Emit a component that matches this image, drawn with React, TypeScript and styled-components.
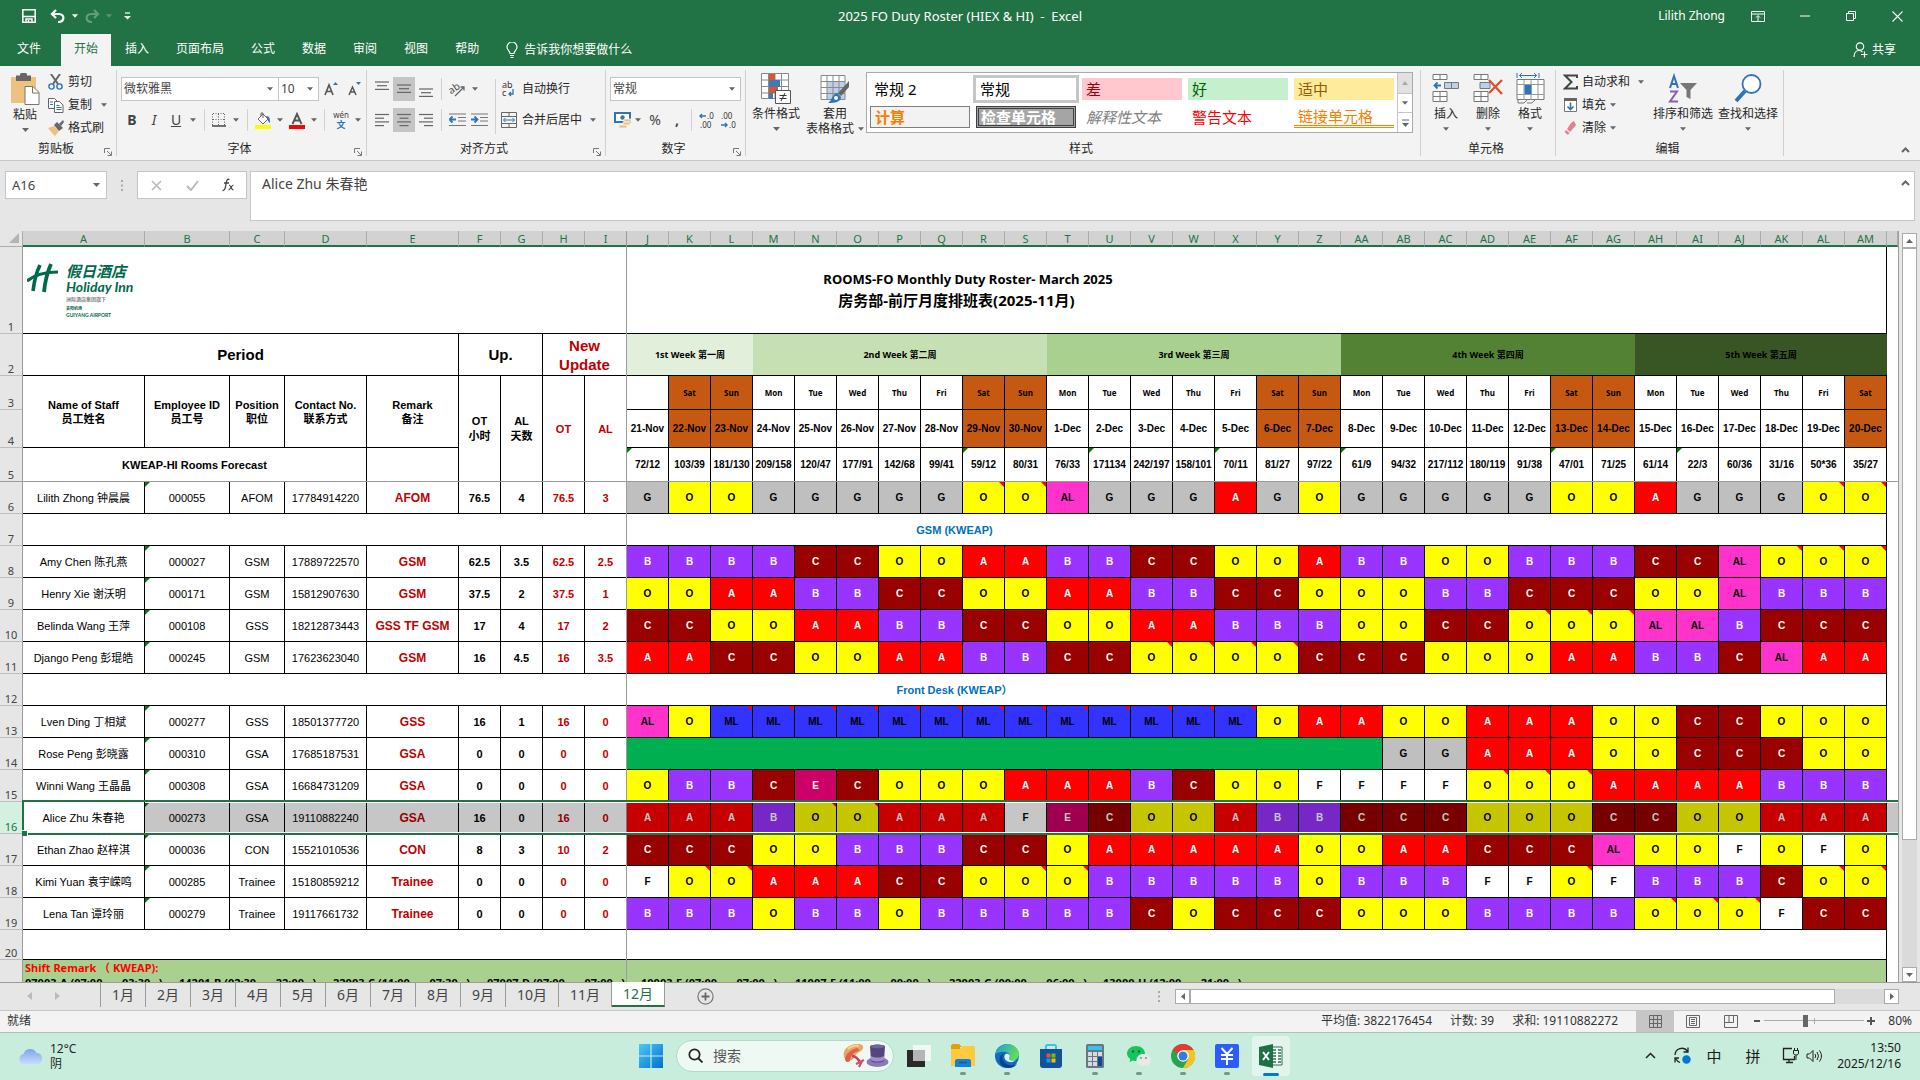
import React from "react";
import styled, { createGlobalStyle, css } from "styled-components";

const UI_FONT = `"Noto Sans", "Noto Sans CJK SC", sans-serif`;
const CELL_FONT = `"Liberation Sans", "Noto Sans CJK SC", sans-serif`;
const GREEN = "#217346";
const LINE = "#000";

const Global = createGlobalStyle`
  *, *::before, *::after { box-sizing: border-box; }
  html, body { margin: 0; padding: 0; }
  body { background: #e6e6e6; font: 12px/16px ${UI_FONT}; color: #262626; }
  button, input, select, textarea { font: inherit; color: inherit; margin: 0; }
`;

/* ---------- frame ---------- */

const Window = styled.div`
  display: flex;
  flex-direction: column;
  height: 100vh;
  min-height: 480px;
  overflow: hidden;
`;

const bareButton = css`
  border: 0;
  padding: 0;
  background: none;
  display: flex;
  align-items: center;
  justify-content: center;
`;

/* ---------- title bar and tabs ---------- */

const TitleBar = styled.header`
  flex: none;
  display: grid;
  grid-template-columns: 1fr auto 1fr;
  align-items: center;
  height: 32px;
  background: ${GREEN};
  color: #fff;
`;
const TitleText = styled.div`
  font-size: 13px;
  white-space: pre;
`;
const UserName = styled.span`
  margin-right: 9px;
`;
const QuickAccess = styled.div`
  display: flex;
  align-items: center;
  padding-left: 16px;
`;
const WindowTools = styled.div`
  display: flex;
  align-items: center;
  justify-content: flex-end;
`;
const QuickButton = styled.button<{ $w: number; $dim?: boolean }>`
  ${bareButton}
  width: ${(p) => p.$w}px;
  height: 30px;
  opacity: ${(p) => (p.$dim ? 0.3 : 1)};
`;
const TabBar = styled.nav`
  flex: none;
  display: flex;
  gap: 1px;
  height: 34px;
  padding-top: 2px;
  padding-left: 4px;
  background: ${GREEN};
  color: #fff;
`;
const Tab = styled.button<{ $active?: boolean; $file?: boolean }>`
  ${bareButton}
  padding: 0 ${(p) => (p.$file ? 19 : 13)}px 2px 13px;
  background: ${(p) => (p.$active ? "#f3f3f3" : "none")};
  color: ${(p) => (p.$active ? GREEN : "#fff")};
`;
const TellMe = styled.button`
  ${bareButton}
  gap: 6px;
  margin-left: 13px;
`;
const Share = styled.button`
  ${bareButton}
  gap: 4px;
  margin-left: auto;
  margin-right: 24px;
`;

/* ---------- ribbon ---------- */

const Ribbon = styled.div`
  flex: none;
  display: flex;
  height: 95px;
  padding: 4px 0;
  background: #f3f3f3;
  border-bottom: 1px solid #c6c6c6;
`;
const Group = styled.section<{ $w: number }>`
  display: flex;
  flex-direction: column;
  flex: none;
  width: ${(p) => p.$w}px;
  border-right: 1px solid #d2d0ce;
`;
const GroupBody = styled.div<{ $pad?: number }>`
  display: flex;
  align-items: flex-start;
  flex: 1;
  padding-left: ${(p) => p.$pad ?? 0}px;
`;
const GroupFoot = styled.div`
  display: grid;
  grid-template-columns: 1fr auto 1fr;
  align-items: end;
  height: 14px;
  padding-right: 4px;
`;
const FootLabel = styled.span`
  line-height: 14px;
`;
const Launcher = styled.button`
  ${bareButton}
  justify-self: end;
`;
const Collapse = styled.button`
  ${bareButton}
  align-self: flex-end;
  margin-left: auto;
  width: 30px;
  height: 12px;
`;
const BigButton = styled.button<{ $w: number }>`
  ${bareButton}
  flex-direction: column;
  justify-content: flex-start;
  width: ${(p) => p.$w}px;
  padding-top: 3px;
  white-space: nowrap;
  & > svg:first-child { margin-bottom: 2px; }
`;
const SmallCaretRow = styled.span`
  display: flex;
  align-items: center;
  gap: 4px;
  min-height: 14px;
  line-height: 14px;
`;
const Stack = styled.div`
  display: flex;
  flex-direction: column;
`;
const StackButton = styled.button`
  ${bareButton}
  justify-content: flex-start;
  gap: 4px;
  height: 23px;
  white-space: nowrap;
`;
const TwoRows = styled.div`
  display: flex;
  flex-direction: column;
  gap: 7px;
  padding-top: 7px;
`;
const ToolRow = styled.div`
  display: flex;
  align-items: center;
  height: 24px;
`;
const Tool = styled.button<{ $w: number; $on?: boolean }>`
  ${bareButton}
  width: ${(p) => p.$w}px;
  height: 24px;
  color: #444;
  font-size: 14px;
  background: ${(p) => (p.$on ? "#c5c5c5" : "none")};
`;
const TextTool = styled.button`
  ${bareButton}
  gap: 5px;
  height: 24px;
  white-space: nowrap;
`;
const Rule = styled.span<{ $w: number; $h?: number }>`
  flex: none;
  display: flex;
  justify-content: center;
  align-self: center;
  width: ${(p) => p.$w}px;
  height: ${(p) => p.$h ?? 22}px;
  &::before { content: ""; width: 1px; background: #d0d0d0; }
`;
const Combo = styled.label<{ $w: number }>`
  display: flex;
  align-items: center;
  width: ${(p) => p.$w}px;
  height: 24px;
  padding-right: 5px;
  background: #fff;
  border: 1px solid #c6c6c6;
  & + & { margin-left: -1px; }
  select {
    appearance: none;
    flex: 1;
    min-width: 0;
    border: 0;
    padding: 0 2px;
    background: none;
    outline: 0;
    color: #444;
  }
`;

const Gallery = styled.div`
  display: flex;
  height: 61px;
  margin: 2px 0 0 2px;
  border: 1px solid #ababab;
  background: #fff;
`;
const GalleryGrid = styled.div`
  display: grid;
  grid-template-columns: repeat(5, 100px);
  grid-auto-rows: 22px;
  gap: 6px;
  padding: 5px 3px;
`;
const Swatch = styled.button<{ $bg?: string; $fg?: string; $kind?: string }>`
  ${bareButton}
  justify-content: flex-start;
  padding-left: 4px;
  font-size: 15px;
  line-height: 20px;
  white-space: pre;
  background: ${(p) => p.$bg ?? "#fff"};
  color: ${(p) => p.$fg ?? "#000"};
  ${(p) => p.$kind === "current" && css`outline: 3px solid #c6c6c6;`}
  ${(p) => p.$kind === "calc" && css`border: 1px solid #7f7f7f; font-weight: 700;`}
  ${(p) => p.$kind === "check" && css`border: 3px double #3f3f3f; font-weight: 700; padding-left: 2px;`}
  ${(p) => p.$kind === "note" && css`font-style: italic;`}
  ${(p) => p.$kind === "link" && css`border-bottom: 3px double #ff8001;`}
`;
const GallerySide = styled.div`
  display: grid;
  grid-template-rows: repeat(3, 1fr);
  width: 15px;
  border-left: 1px solid #c6c6c6;
`;
const GalleryStep = styled.button<{ $off?: boolean }>`
  ${bareButton}
  background: ${(p) => (p.$off ? "#e1e1e1" : "#fff")};
  & + & { border-top: 1px solid #c6c6c6; }
`;

/* ---------- formula bar ---------- */

const FormulaBar = styled.div`
  flex: none;
  display: flex;
  align-items: flex-start;
  padding: 10px 5px;
  height: 70px;
  background: #e6e6e6;
`;
const NameBox = styled.label`
  display: flex;
  align-items: center;
  width: 102px;
  height: 28px;
  padding: 0 6px;
  background: #fff;
  border: 1px solid #c6c6c6;
  input {
    flex: 1;
    min-width: 0;
    border: 0;
    padding: 0;
    outline: 0;
    background: none;
    font-size: 13px;
    color: #444;
  }
`;
const Grip = styled.span`
  display: flex;
  justify-content: center;
  align-items: center;
  width: 30px;
  height: 28px;
`;
const FormulaTools = styled.div`
  display: flex;
  width: 110px;
  height: 28px;
  background: #fff;
  border: 1px solid #c6c6c6;
  margin-right: 3px;
`;
const FormulaTool = styled.button`
  ${bareButton}
  flex: 1;
`;
const FormulaBox = styled.label`
  display: flex;
  flex: 1;
  align-items: flex-start;
  height: 50px;
  padding: 2px 4px 0 11px;
  background: #fff;
  border: 1px solid #c6c6c6;
  textarea {
    flex: 1;
    height: 40px;
    border: 0;
    padding: 0;
    outline: 0;
    resize: none;
    background: none;
    font-size: 14px;
    line-height: 20px;
    color: #444;
  }
  svg { margin-top: 6px; }
`;

/* ---------- sheet ---------- */

const SheetArea = styled.main`
  flex: 1;
  min-height: 0;
  display: flex;
`;
const Viewport = styled.div`
  position: relative;
  flex: 1;
  min-width: 0;
  overflow: hidden;
  background: #fff;
  border-right: 1px solid #9b9b9b;
`;
const Grid = styled.table`
  table-layout: fixed;
  width: 100%;
  border-collapse: separate;
  border-spacing: 0;
  font-family: ${CELL_FONT};
  font-size: 11px;
  line-height: 14px;
  color: #000;
`;
const ColHead = styled.th`
  height: 16px;
  padding: 1px 0 0;
  background: #d2d2d2;
  border-right: 1px solid #ababab;
  border-bottom: 2px solid ${GREEN};
  font: 11px/13px ${UI_FONT};
  color: ${GREEN};
`;
const Corner = styled.td`
  padding: 0;
  background: #e6e6e6;
  border-right: 1px solid #ababab;
  border-bottom: 1px solid #ababab;
  svg { display: block; margin: 0 3px 2px auto; }
`;
const RowHead = styled.th<{ $on?: boolean }>`
  padding: 0;
  vertical-align: bottom;
  text-align: center;
  background: ${(p) => (p.$on ? "#d3f0e0" : "#e6e6e6")};
  color: ${(p) => (p.$on ? GREEN : "#444")};
  border-right: 1px solid #9b9b9b;
  border-bottom: 1px solid #bdbdbd;
  font: 11px/12px ${UI_FONT};
`;
const Row = styled.tr<{ $h: number }>`
  height: ${(p) => p.$h}px;
`;
type CellProps = {
  $bg?: string;
  $fg?: string;
  $bold?: boolean;
  $size?: number;
  $lh?: number;
  $flag?: "green" | "red";
  $open?: boolean;
  $ui?: boolean;
};
const Cell = styled.td<CellProps>`
  position: relative;
  padding: 0;
  text-align: center;
  vertical-align: middle;
  white-space: pre;
  background: ${(p) => p.$bg ?? "#fff"};
  color: ${(p) => p.$fg ?? "#000"};
  font-weight: ${(p) => (p.$bold ? 700 : 400)};
  font-size: ${(p) => p.$size ?? 11}px;
  line-height: ${(p) => p.$lh ?? 14}px;
  ${(p) => p.$ui && css`font-family: ${UI_FONT};`}
  border-right: ${(p) => (p.$open ? 0 : 1)}px solid ${LINE};
  border-bottom: 1px solid ${LINE};
  ${(p) =>
    p.$flag &&
    css`
      &::after {
        content: "";
        position: absolute;
        top: 0;
        ${p.$flag === "green" ? "left: 0;" : "right: 0;"}
        border-top: 5px solid ${p.$flag === "green" ? "#007a00" : "#f00"};
        ${p.$flag === "green" ? "border-right" : "border-left"}: 5px solid transparent;
      }
    `}
`;
const Spare = styled.td`
  padding: 0;
  background: #fff;
`;
const TitleLine = styled.div<{ $size: number }>`
  font: 700 ${(p) => p.$size}px/21px ${UI_FONT};
`;
const Logo = styled.div`
  position: absolute;
  top: 16px;
  left: 4px;
  display: flex;
  gap: 8px;
  text-align: left;
  font-weight: 700;
  color: #00694b;
`;
const LogoText = styled.div<{ $size: number; $lh: number; $grey?: boolean; $slant?: boolean }>`
  font-family: Lato, "Noto Sans CJK SC", sans-serif;
  font-size: ${(p) => p.$size}px;
  line-height: ${(p) => p.$lh}px;
  color: ${(p) => (p.$grey ? "#888" : "inherit")};
  font-style: ${(p) => (p.$slant ? "italic" : "normal")};
`;
const FreezeV = styled.div`
  position: absolute;
  top: 0;
  bottom: 0;
  left: 626px;
  width: 1px;
  background: #9b9b9b;
`;
const FreezeH = styled.div<{ $top: number }>`
  position: absolute;
  top: ${(p) => p.$top}px;
  left: 0;
  right: 0;
  height: 1px;
  background: #9b9b9b;
`;
const Selection = styled.div<{ $top: number; $h: number }>`
  position: absolute;
  top: ${(p) => p.$top - 2}px;
  left: 22px;
  right: 0;
  height: ${(p) => p.$h + 3}px;
  border: 2px solid ${GREEN};
  border-right: 0;
  &::before {
    content: "";
    position: absolute;
    inset: 0 0 0 121px;
    border-top: 1px solid #fff;
    border-bottom: 1px solid #fff;
    background: rgba(0, 0, 0, 0.225);
    background-clip: padding-box;
  }
  &::after {
    content: "";
    position: absolute;
    left: -2px;
    bottom: -3px;
    width: 6px;
    height: 6px;
    background: ${GREEN};
    border-top: 1px solid #fff;
    border-right: 1px solid #fff;
  }
`;
const ShiftBlock = styled.div`
  height: 59px;
  padding: 0 2px;
  text-align: left;
  font-family: ${UI_FONT};
`;
const ShiftTitle = styled.div`
  line-height: 16px;
  color: #f00;
`;
const ShiftList = styled.div`
  display: flex;
  line-height: 14px;
`;
const ShiftItem = styled.span`
  width: 154px;
`;

const ScrollV = styled.div`
  flex: none;
  display: flex;
  flex-direction: column;
  width: 21px;
  padding: 2px 3px 0;
`;
const ScrollStep = styled.button`
  ${bareButton}
  flex: none;
  width: 15px;
  height: 15px;
  background: #fff;
  border: 1px solid #ababab;
`;
const Track = styled.div<{ $row?: boolean }>`
  flex: 1;
  display: flex;
  flex-direction: ${(p) => (p.$row ? "row" : "column")};
  background: #dadada;
`;
const Thumb = styled.div<{ $share: string }>`
  flex: 0 0 ${(p) => p.$share};
  background: #fff;
  border: 1px solid #ababab;
`;

/* ---------- sheet tabs, status bar ---------- */

const SheetTabs = styled.div`
  flex: none;
  display: flex;
  height: 28px;
  padding-left: 15px;
  border-top: 1px solid #9b9b9b;
  background: #e6e6e6;
  color: #444;
`;
const TabNav = styled.button`
  ${bareButton}
  width: 28px;
  height: 26px;
`;
const SheetTab = styled.button<{ $w: number; $on?: boolean }>`
  ${bareButton}
  width: ${(p) => p.$w}px;
  font-size: 14px;
  height: 24px;
  border-right: 1px solid #9b9b9b;
  ${(p) =>
    p.$on &&
    css`
      margin-top: -1px;
      height: 25px;
      background: #fff;
      color: ${GREEN};
      border-bottom: 2px solid ${GREEN};
    `}
`;
const SheetTabList = styled.div`
  display: flex;
  margin-left: 29px;
  border-left: 1px solid #9b9b9b;
  height: 24px;
`;
const AddSheet = styled.button`
  ${bareButton}
  width: 80px;
`;
const ScrollH = styled.div`
  display: flex;
  width: 38%;
  height: 15px;
  margin: 6px 21px 0 0;
`;
const TabGrip = styled.span`
  margin-left: auto;
  display: flex;
  align-items: center;
  padding-right: 15px;
`;
const StatusBar = styled.footer`
  flex: none;
  display: flex;
  align-items: center;
  height: 22px;
  padding: 0 8px 1px 7px;
  background: #f3f3f3;
  border-top: 1px solid #c6c6c6;
  color: #333;
`;
const Stats = styled.div`
  display: flex;
  gap: 18px;
  margin-left: auto;
  margin-right: 18px;
`;
const ViewButton = styled.button<{ $on?: boolean }>`
  ${bareButton}
  width: 38px;
  height: 21px;
  background: ${(p) => (p.$on ? "#c6c6c6" : "none")};
`;
const ZoomStep = styled.button`
  ${bareButton}
  width: 14px;
  height: 20px;
`;
const ZoomRange = styled.input`
  appearance: none;
  width: 100px;
  height: 14px;
  background: linear-gradient(#ababab, #ababab) 0 6px / 100% 1px no-repeat,
    linear-gradient(#ababab, #ababab) 50% 50% / 1px 6px no-repeat;
  &::-webkit-slider-thumb {
    appearance: none;
    width: 5px;
    height: 12px;
    background: #666;
  }
`;
const ZoomValue = styled.span`
  width: 34px;
  text-align: right;
`;

/* ---------- taskbar ---------- */

const Taskbar = styled.div`
  flex: none;
  display: grid;
  grid-template-columns: 1fr auto 1fr;
  align-items: center;
  height: 48px;
  padding-bottom: 1px;
  background: #c8eddd;
  box-shadow: inset 0 1px #a9c5b9;
`;
const Weather = styled.button`
  ${bareButton}
  justify-self: start;
  gap: 6px;
  padding-left: 18px;
  text-align: left;
  line-height: 15px;
`;
const Apps = styled.div`
  display: flex;
  align-items: center;
  padding-left: 2px;
`;
const AppButton = styled.button<{ $dot?: boolean; $on?: boolean }>`
  ${bareButton}
  position: relative;
  width: 44px;
  height: 40px;
  ${(p) =>
    p.$on &&
    css`
      width: 38px;
      margin: 0 3px;
      border-radius: 4px;
      background: #e2f5ed;
    `}
  ${(p) =>
    (p.$dot || p.$on) &&
    css`
      &::after {
        content: "";
        position: absolute;
        bottom: ${p.$on ? 0 : 1}px;
        width: ${p.$on ? 16 : 6}px;
        height: 3px;
        border-radius: 2px;
        background: ${p.$on ? "#0078d4" : "#7c938a"};
      }
    `}
`;
const Search = styled.label`
  display: flex;
  align-items: center;
  gap: 10px;
  width: 218px;
  height: 32px;
  margin: 0 3px;
  padding: 0 4px 0 11px;
  border-radius: 16px;
  background: #eef9f4;
  border: 1px solid #b5d8c9;
  input {
    flex: 1;
    min-width: 0;
    padding: 0;
    border: 0;
    outline: 0;
    background: none;
    font-size: 14px;
  }
  input::placeholder { color: #555; opacity: 1; }
`;
const Tray = styled.div`
  display: flex;
  justify-content: flex-end;
  align-items: center;
  padding-right: 19px;
  color: #1a1a1a;
`;
const TrayButton = styled.button<{ $w: number }>`
  ${bareButton}
  width: ${(p) => p.$w}px;
  height: 40px;
  font-size: 15px;
`;
const Clock = styled.time`
  width: 78px;
  text-align: right;
  line-height: 16px;
`;

/* ---------- drawings ---------- */

const Drawing = styled.svg`
  flex: none;
`;
const Svg = ({ w, h = w, children, vb }: { w: number; h?: number; vb?: string; children: React.ReactNode }) => (
  <Drawing width={w} height={h} viewBox={vb ?? `0 0 ${w} ${h}`} fill="none" aria-hidden="true">
    {children}
  </Drawing>
);
const Caret = ({ c = "#666", w = 7 }: { c?: string; w?: number }) => (
  <Svg w={w} h={4} vb="0 0 7 4"><path d="M0 0h7L3.5 4z" fill={c} /></Svg>
);
const LaunchIcon = () => (
  <Svg w={8}><path d="M.5 5V.5H6M7.5 3.5v4h-4M3 3l4 4" stroke="#777" /></Svg>
);
const UpChevron = () => (
  <Svg w={9} h={6}><path d="M1 5l3.5-3.5L8 5" stroke="#666" strokeWidth="2" /></Svg>
);
const Lines = ({ rows, top }: { rows: [number, number][]; top: number }) => (
  <Svg w={14} h={18}>
    {rows.map(([x, len], i) => (
      <path key={i} d={`M${x} ${top + i * 3.7}h${len}`} stroke="#666" strokeWidth="1.2" />
    ))}
  </Svg>
);
const Indent = ({ right }: { right?: boolean }) => (
  <Svg w={17} h={14}>
    <path d="M0 1h17M9 4.5h8M9 8h8M0 12.5h17" stroke="#777" />
    <path d={right ? "M0 6.5h6M3.5 3.5l3 3-3 3" : "M7 6.5H1M3.5 3.5l-3 3 3 3"} stroke="#2f75b5" strokeWidth="1.8" />
  </Svg>
);

/* ---------- roster data ---------- */

const SHIFT: Record<string, [string, string]> = {
  G: ["#bfbfbf", "#000"],
  O: ["#ffff00", "#000"],
  A: ["#ff0000", "#fff"],
  B: ["#9933ff", "#fff"],
  C: ["#990000", "#fff"],
  E: ["#cc0066", "#fff"],
  F: ["#ffffff", "#000"],
  AL: ["#ff33cc", "#000"],
  ML: ["#3333ff", "#000"],
};
const COLS: [string, number][] = [
  ["A", 122], ["B", 85], ["C", 55], ["D", 82], ["E", 92], ["F", 42], ["G", 42], ["H", 42], ["I", 42],
  ..."J K L M N O P Q R S T U V W X Y Z AA AB AC AD AE AF AG AH AI AJ AK AL AM"
    .split(" ")
    .map((n): [string, number] => [n, 42]),
];
const WEEKDAYS = ["Sat", "Sun", "Mon", "Tue", "Wed", "Thu", "Fri"];
const dayOf = (i: number) => (i < 1 ? "" : WEEKDAYS[(i - 1) % 7]);
const dateOf = (i: number) => (i < 10 ? `${21 + i}-Nov` : `${i - 9}-Dec`);
const isWeekend = (i: number) => dayOf(i).startsWith("S");
const FORECAST =
  "72/12 103/39 181/130 209/158 120/47 177/91 142/68 99/41 59/12 80/31 76/33 171134 242/197 158/101 70/11 81/27 97/22 61/9 94/32 217/112 180/119 91/38 47/01 71/25 61/14 22/3 60/36 31/16 50*36 35/27".split(" ");
const FORECAST_FLAGS = [0, 8, 11, 14, 17, 22, 25];
const WEEKS: [string, number, string][] = [
  ["1st Week 第一周", 3, "#e2efda"],
  ["2nd Week 第二周", 7, "#c6e0b4"],
  ["3rd Week 第三周", 7, "#a9d08e"],
  ["4th Week 第四周", 7, "#548235"],
  ["5th Week 第五周", 6, "#375623"],
];
type Staff = { row: number; info: string[]; shifts: string };
type Line = Staff | { row: number; section: string };
const LINES: Line[] = [
  { row: 6, info: ["Lilith Zhong 钟晨晨", "000055", "AFOM", "17784914220", "AFOM", "76.5", "4", "76.5", "3"], shifts: "G O O G G G G G O* O* AL G G G A G O G G G G G O O A G G G O* O*" },
  { row: 7, section: "GSM (KWEAP)" },
  { row: 8, info: ["Amy Chen 陈孔燕", "000027", "GSM", "17889722570", "GSM", "62.5", "3.5", "62.5", "2.5"], shifts: "B B B B C C O O A A B B C C O O A B B O O B B B C C AL O* O* O*" },
  { row: 9, info: ["Henry Xie 谢沃明", "000171", "GSM", "15812907630", "GSM", "37.5", "2", "37.5", "1"], shifts: "O O A A B B C C O O A A B B C C O O O B B C C C O O AL B B B" },
  { row: 10, info: ["Belinda Wang 王萍", "000108", "GSS", "18212873443", "GSS TF GSM", "17", "4", "17", "2"], shifts: "C C O O A A B B C C O O A A B B B O O C C O* O* O* AL AL B C C C" },
  { row: 11, info: ["Django Peng 彭琨皓", "000245", "GSM", "17623623040", "GSM", "16", "4.5", "16", "3.5"], shifts: "A A C C O O A A B B C C O* O* O* O* C C C O O O A A B B C AL A A" },
  { row: 12, section: "Front Desk (KWEAP）" },
  { row: 13, info: ["Lven Ding 丁相斌", "000277", "GSS", "18501377720", "GSS", "16", "1", "16", "0"], shifts: "AL O ML* ML* ML* ML* ML* ML* ML* ML* ML* ML* ML* ML* ML* O A A O O A A A O O C C O O O" },
  { row: 14, info: ["Rose Peng 彭晓露", "000310", "GSA", "17685187531", "GSA", "0", "0", "0", "0"], shifts: "=18 G G A A A O O C C C O O" },
  { row: 15, info: ["Winni Wang 王晶晶", "000308", "GSA", "16684731209", "GSA", "0", "0", "0", "0"], shifts: "O B B C E C O O O A A A B C O O F F F F O* O* O* A A A A B B B" },
  { row: 16, info: ["Alice Zhu 朱春艳", "000273", "GSA", "19110882240", "GSA", "16", "0", "16", "0"], shifts: "A A A B O* O* A A A F E C O O A B B C C C O O O C C O O A A A" },
  { row: 17, info: ["Ethan Zhao 赵梓淇", "000036", "CON", "15521010536", "CON", "8", "3", "10", "2"], shifts: "C C C O O B B B C C O A A A A A O O A A C C C AL O O F O F O" },
  { row: 18, info: ["Kimi Yuan 袁宇嵘鸣", "000285", "Trainee", "15180859212", "Trainee", "0", "0", "0", "0"], shifts: "F O* O* A A A C C O O* O* B B B B B O B B B F F O* F B B B C O* O*" },
  { row: 19, info: ["Lena Tan 谭玲丽", "000279", "Trainee", "19117661732", "Trainee", "0", "0", "0", "0"], shifts: "B B B O B B O B B B B B C O C C C O O O B B B B O* O* O* F C C" },
];
const HEIGHTS = [16, 87, 42, 34, 38, 34];
const topOf = (row: number) =>
  HEIGHTS.slice(0, row).reduce((a, b) => a + b, 0) + Math.max(0, row - 6) * 32;
const RED = "#c00000";

const SHIFT_NOTES = [
  "07003-A (07:00 —  03:30   )", "14201-B (02:30 —  22:00   )", "22003-C (11:00 —  07:30   )", "07007-D (07:00 —  07:00   )",
  "10003-E (07:00 —  07:00   )", "11007-F (11:00 —  00:00   )", "22003-G (00:00 —  06:00   )", "13000-H (12:00 —  21:00   )",
];

function StaffRow({ line }: { line: Staff }) {
  return (
    <Row $h={32}>
      <RowHead scope="row" $on={line.row === 16}>{line.row}</RowHead>
      {line.info.map((text, i) => (
        <Cell
          key={i}
          $bold={i > 3}
          $size={i === 4 ? 12 : 11}
          $fg={i === 4 || i > 6 ? RED : "#000"}
          $flag={i === 1 ? "green" : undefined}
        >
          {text}
        </Cell>
      ))}
      {line.shifts.split(" ").map((code, i) => {
        if (code[0] === "=") return <Cell key={i} colSpan={Number(code.slice(1))} $bg="#00b050" />;
        const name = code.replace("*", "");
        const [bg, fg] = SHIFT[name];
        return (
          <Cell key={i} $bold $size={10} $bg={bg} $fg={fg} $flag={code.endsWith("*") ? "red" : undefined}>
            {name}
          </Cell>
        );
      })}
      <Spare />
    </Row>
  );
}

function Roster() {
  const days = Array.from({ length: 30 }, (_, i) => i);
  return (
    <Viewport>
      <Grid>
        <colgroup>
          <col style={{ width: 23 }} />
          {COLS.map(([n, w]) => <col key={n} style={{ width: w }} />)}
          <col />
        </colgroup>
        <thead>
          <tr>
            <Corner><Svg w={10}><path d="M10 0v10H0z" fill="#b4b4b4" /></Svg></Corner>
            {COLS.map(([n]) => <ColHead key={n} scope="col">{n}</ColHead>)}
            <ColHead />
          </tr>
        </thead>
        <tbody>
          <Row $h={87}>
            <RowHead scope="row">1</RowHead>
            <Cell colSpan={39}>
              <Logo>
                <svg width="31" height="30" viewBox="0 0 31 30" fill="none" stroke="#00694b" aria-hidden="true">
                  <path d="M13 2C9 10 7 20 6 28" strokeWidth="3.6" />
                  <path d="M24 1c-4 9-6 18-7 28" strokeWidth="3.8" />
                  <path d="M0 18C8 11 18 9 31 9" strokeWidth="3" />
                </svg>
                <div>
                  <LogoText $size={15} $lh={16} $slant>假日酒店</LogoText>
                  <LogoText $size={14} $lh={16} $slant>Holiday Inn</LogoText>
                  <LogoText $size={5} $lh={9} $grey>洲际酒店集团旗下</LogoText>
                  <LogoText $size={4} $lh={9}>贵阳机场</LogoText>
                  <LogoText $size={5} $lh={4}>GUIYANG AIRPORT</LogoText>
                </div>
              </Logo>
              <TitleLine $size={13}>{"        ROOMS-FO Monthly Duty Roster- March 2025"}</TitleLine>
              <TitleLine $size={15}>{" 房务部-前厅月度排班表(2025-11月)"}</TitleLine>
            </Cell>
            <Spare />
          </Row>
          <Row $h={42}>
            <RowHead scope="row">2</RowHead>
            <Cell colSpan={5} $bold $size={15}>Period</Cell>
            <Cell colSpan={2} $bold $size={15}>Up.</Cell>
            <Cell colSpan={2} $bold $size={15} $lh={19} $fg={RED}>{"New\nUpdate"}</Cell>
            {WEEKS.map(([t, span, bg]) => (
              <Cell key={t} colSpan={span} $bold $size={9} $bg={bg} $open $ui>{t}</Cell>
            ))}
            <Spare />
          </Row>
          <Row $h={34}>
            <RowHead scope="row">3</RowHead>
            {["Name of Staff\n员工姓名", "Employee ID\n员工号", "Position\n职位", "Contact No.\n联系方式", "Remark\n备注"].map((t) => (
              <Cell key={t} rowSpan={2} $bold>{t}</Cell>
            ))}
            <Cell rowSpan={3} $bold $lh={15}>{"OT\n小时"}</Cell>
            <Cell rowSpan={3} $bold $lh={15}>{"AL\n天数"}</Cell>
            <Cell rowSpan={3} $bold $fg={RED}>OT</Cell>
            <Cell rowSpan={3} $bold $fg={RED}>AL</Cell>
            {days.map((i) => (
              <Cell key={i} $bold $ui $size={8} $bg={isWeekend(i) ? "#c65911" : undefined}>{dayOf(i)}</Cell>
            ))}
            <Spare />
          </Row>
          <Row $h={38}>
            <RowHead scope="row">4</RowHead>
            {days.map((i) => (
              <Cell key={i} $bold $size={10} $bg={isWeekend(i) ? "#c65911" : undefined}>{dateOf(i)}</Cell>
            ))}
            <Spare />
          </Row>
          <Row $h={34}>
            <RowHead scope="row">5</RowHead>
            <Cell colSpan={4} $bold>KWEAP-HI Rooms Forecast</Cell>
            <Cell />
            {FORECAST.map((t, i) => (
              <Cell key={i} $bold $size={10} $flag={FORECAST_FLAGS.includes(i) ? "green" : undefined}>{t}</Cell>
            ))}
            <Spare />
          </Row>
          {LINES.map((line) =>
            "info" in line ? (
              <StaffRow key={line.row} line={line} />
            ) : (
              <Row key={line.row} $h={32}>
                <RowHead scope="row">{line.row}</RowHead>
                <Cell colSpan={39} $bold $fg="#0070c0">{line.section}</Cell>
                <Spare />
              </Row>
            ),
          )}
          <Row $h={30}>
            <RowHead scope="row">20</RowHead>
            <Cell colSpan={39} />
            <Spare />
          </Row>
          <Row $h={60}>
            <RowHead scope="row" />
            <Cell colSpan={39} $bg="#a9d08e" $bold>
              <ShiftBlock>
                <ShiftTitle>Shift Remark （ KWEAP):</ShiftTitle>
                <ShiftList>{SHIFT_NOTES.map((t) => <ShiftItem key={t}>{t}</ShiftItem>)}</ShiftList>
              </ShiftBlock>
            </Cell>
            <Spare />
          </Row>
        </tbody>
      </Grid>
      <FreezeV />
      <FreezeH $top={topOf(6) - 1} />
      <Selection $top={topOf(16)} $h={32} />
    </Viewport>
  );
}

/* ---------- ribbon groups ---------- */

const Foot = ({ children, launch = true }: { children: string; launch?: boolean }) => (
  <GroupFoot>
    <span />
    <FootLabel>{children}</FootLabel>
    {launch ? <Launcher aria-label={`${children}设置`}><LaunchIcon /></Launcher> : <span />}
  </GroupFoot>
);

function Clipboard() {
  return (
    <Group $w={117}>
      <GroupBody $pad={2}>
        <BigButton $w={46}>
          <Svg w={30} h={32}>
            <path d="M1 4h25v26H1z" fill="#eec27e" />
            <path d="M6 2.500h4a3.500 3.500 0 0 1 7 0h4V8H6z" fill="#666" />
            <path d="M15 13.500h8l6 6V31.500H15z" fill="#fff" stroke="#777" />
            <path d="M22.500 14v6H29" stroke="#777" />
          </Svg>
          <span>粘贴</span>
          <SmallCaretRow><Caret /></SmallCaretRow>
        </BigButton>
        <Stack>
          <StackButton>
            <Svg w={16}>
              <path d="M3 0l7 10M12 0L5 10" stroke="#666" strokeWidth="2" />
              <circle cx="3.500" cy="12.500" r="2.600" stroke="#2f75b5" strokeWidth="1.400" />
              <circle cx="11.500" cy="12.500" r="2.600" stroke="#2f75b5" strokeWidth="1.400" />
            </Svg>
            剪切
          </StackButton>
          <StackButton>
            <Svg w={16}>
              <path d="M.5 1.500h6l3 3v7h-9z" fill="#fff" stroke="#666" />
              <path d="M6.500 4.500h5l3.500 3.500v7.500H6.500z" fill="#fff" stroke="#666" />
              <path d="M2 5h3M2 7.500h3M8.500 8.500h3M8.500 10.500h5M8.500 12.500h5" stroke="#2f75b5" />
            </Svg>
            复制
            <Rule $w={1} $h={0} />
            <Caret w={6} />
          </StackButton>
          <StackButton>
            <Svg w={16}>
              <path d="M0 8l6-2 5 5-4 5C4 13 2 11 0 8z" fill="#eec27e" />
              <path d="M6 5l3-3 6 6-4 3z" fill="#666" />
              <path d="M11 4l4-4 1 2-3 4z" fill="#666" />
            </Svg>
            格式刷
          </StackButton>
        </Stack>
      </GroupBody>
      <Foot>剪贴板</Foot>
    </Group>
  );
}

function FontGroup() {
  return (
    <Group $w={250}>
      <GroupBody $pad={4}>
        <TwoRows>
          <ToolRow>
            <Combo $w={158}>
              <select aria-label="字体名称" defaultValue="微软雅黑"><option>微软雅黑</option></select>
              <Caret w={6} />
            </Combo>
            <Combo $w={41}>
              <select aria-label="字号" defaultValue="10"><option>10</option></select>
              <Caret w={6} />
            </Combo>
            <Tool $w={24} aria-label="增大字号">
              <Svg w={14} h={16}><path d="M1 14L5 4l4 10M2.500 10.500h5" stroke="#555" strokeWidth="1.600" /><path d="M9 4l2.500-3L14 4z" fill="#2f75b5" /></Svg>
            </Tool>
            <Tool $w={22} aria-label="减小字号">
              <Svg w={13} h={16}><path d="M1 14l3.500-8L8 14M2.500 11h4" stroke="#555" strokeWidth="1.500" /><path d="M8 1l2.500 3L13 1z" fill="#2f75b5" /></Svg>
            </Tool>
          </ToolRow>
          <ToolRow>
            <Tool $w={22}><b>B</b></Tool>
            <Tool $w={22}><i>I</i></Tool>
            <Tool $w={22}><u>U</u></Tool>
            <Tool $w={12} aria-label="下划线选项"><Caret w={6} /></Tool>
            <Rule $w={10} />
            <Tool $w={20} aria-label="边框">
              <Svg w={14}><path d="M1 .5h12M1 6.500h12M.5 1v12M6.500 1v12M12.500 1v12" stroke="#666" strokeDasharray="1 1.500" /><path d="M0 13h14" stroke="#444" strokeWidth="1.500" /></Svg>
            </Tool>
            <Tool $w={14} aria-label="边框选项"><Caret w={6} /></Tool>
            <Rule $w={8} />
            <Tool $w={24} aria-label="填充颜色">
              <Svg w={16} h={17}><path d="M3 7l5-5 5 5-5 5z" fill="#fff" stroke="#666" /><path d="M6 4V1h2v5" stroke="#666" /><path d="M11 4c4 0 4 3 4 7-2-1-2-3-3-5z" fill="#2f75b5" /><path d="M0 13h16v4H0z" fill="#ff0" /></Svg>
            </Tool>
            <Tool $w={10} aria-label="填充选项"><Caret w={6} /></Tool>
            <Tool $w={24} aria-label="字体颜色">
              <Svg w={16} h={17}><path d="M3.500 12L8 2l4.500 10M5 8.500h6" stroke="#555" strokeWidth="1.900" /><path d="M0 13h16v4H0z" fill="#f00" /></Svg>
            </Tool>
            <Tool $w={10} aria-label="颜色选项"><Caret w={6} /></Tool>
            <Rule $w={10} />
            <Tool $w={24} aria-label="拼音">
              <Svg w={18} h={20}>
                <text x="9" y="8" textAnchor="middle" fontSize="8" fontFamily="Noto Sans" fill="#444">wén</text>
                <text x="9" y="18" textAnchor="middle" fontSize="9" fontWeight="700" fontFamily="Noto Sans CJK SC" fill="#2f75b5">文</text>
              </Svg>
            </Tool>
            <Tool $w={10} aria-label="拼音选项"><Caret w={6} /></Tool>
          </ToolRow>
        </TwoRows>
      </GroupBody>
      <Foot>字体</Foot>
    </Group>
  );
}

function AlignGroup() {
  const full: [number, number][] = [[0, 14], [2, 10], [0, 14]];
  return (
    <Group $w={239}>
      <GroupBody $pad={4}>
        <TwoRows>
          <ToolRow>
            <Tool $w={22} aria-label="顶端对齐"><Lines top={2} rows={full} /></Tool>
            <Tool $w={22} $on aria-label="垂直居中"><Lines top={5} rows={full} /></Tool>
            <Tool $w={22} aria-label="底端对齐"><Lines top={9} rows={full} /></Tool>
            <Rule $w={8} />
            <Tool $w={24} aria-label="方向">
              <Svg w={17} h={16}>
                <text x="0" y="11" fontSize="10" fontFamily="Noto Sans" fill="#444" transform="rotate(-35 5 9)">ab</text>
                <path d="M6 15l9-9M11.500 6H15v3.500" stroke="#666" strokeWidth="1.300" />
              </Svg>
            </Tool>
            <Tool $w={12} aria-label="方向选项"><Caret w={6} /></Tool>
          </ToolRow>
          <ToolRow>
            <Tool $w={22} aria-label="左对齐"><Lines top={3.5} rows={[[0, 14], [0, 9], [0, 14], [0, 9]]} /></Tool>
            <Tool $w={22} $on aria-label="居中"><Lines top={3.5} rows={[[0, 14], [2.5, 9], [0, 14], [2.5, 9]]} /></Tool>
            <Tool $w={22} aria-label="右对齐"><Lines top={3.5} rows={[[0, 14], [5, 9], [0, 14], [5, 9]]} /></Tool>
            <Rule $w={8} />
            <Tool $w={24} aria-label="减少缩进量"><Indent /></Tool>
            <Tool $w={20} aria-label="增加缩进量"><Indent right /></Tool>
          </ToolRow>
        </TwoRows>
        <Rule $w={12} $h={55} />
        <TwoRows>
          <ToolRow>
            <TextTool>
              <Svg w={16} h={18}>
                <text x="1" y="8" fontSize="9" fontFamily="Noto Sans" fill="#333">ab</text>
                <text x="1" y="16" fontSize="9" fontFamily="Noto Sans" fill="#333">c</text>
                <path d="M12 9v5H8M10 12l-2 2 2 2" stroke="#2f75b5" strokeWidth="1.300" />
              </Svg>
              自动换行
            </TextTool>
          </ToolRow>
          <ToolRow>
            <TextTool>
              <Svg w={16}>
                <path d="M.5.500h15v15H.500zM.500 4.500h15M.500 11.500h15M8 1v3M8 12v3" stroke="#666" />
                <path d="M2.500 8h11M4.500 6l-2 2 2 2M11.500 6l2 2-2 2" stroke="#2f75b5" />
              </Svg>
              合并后居中
            </TextTool>
            <Tool $w={22} aria-label="合并选项"><Caret w={6} /></Tool>
          </ToolRow>
        </TwoRows>
      </GroupBody>
      <Foot>对齐方式</Foot>
    </Group>
  );
}

function NumberGroup() {
  const decimals = (more: boolean) => (
    <Svg w={17} h={18}>
      <text x={more ? 8 : 0} y="8" fontSize="8" fontFamily="Noto Sans" fill="#333">{more ? ".0" : ".00"}</text>
      <text x={more ? 1 : 8} y="17" fontSize="8" fontFamily="Noto Sans" fill="#333">{more ? ".00" : ".0"}</text>
      <path d={more ? "M7 5H1M3 3L1 5l2 2" : "M0 14h6M4 12l2 2-2 2"} stroke="#2f75b5" strokeWidth="1.400" />
    </Svg>
  );
  return (
    <Group $w={140}>
      <GroupBody $pad={4}>
        <TwoRows>
          <ToolRow>
            <Combo $w={131}>
              <select aria-label="数字格式" defaultValue="常规"><option>常规</option></select>
              <Caret w={6} />
            </Combo>
          </ToolRow>
          <ToolRow>
            <Tool $w={24} aria-label="会计数字格式">
              <Svg w={17} h={18}>
                <path d="M1 2h15v9H1z" fill="#fff" stroke="#2f75b5" strokeWidth="2" />
                <circle cx="8.500" cy="6.500" r="2.200" fill="#2f75b5" />
                <path d="M10 8h7v3h-7zM9 11h7v3H9zM5 14h8v3H5z" fill="#eec27e" stroke="#f3f3f3" strokeWidth=".7" />
              </Svg>
            </Tool>
            <Tool $w={8} aria-label="货币选项"><Caret w={6} /></Tool>
            <Tool $w={26}>%</Tool>
            <Tool $w={18}><b>,</b></Tool>
            <Rule $w={10} />
            <Tool $w={22} aria-label="增加小数位数">{decimals(true)}</Tool>
            <Tool $w={22} aria-label="减少小数位数">{decimals(false)}</Tool>
          </ToolRow>
        </TwoRows>
      </GroupBody>
      <Foot>数字</Foot>
    </Group>
  );
}

function StyleGroup() {
  return (
    <Group $w={675}>
      <GroupBody>
        <BigButton $w={60}>
          <Svg w={30} h={31}>
            <path d="M.5.500h27v25H.500z" fill="#fff" />
            <path d="M.5.500h27v25H.500zM.500 7h27M.500 13.500h27M.500 20h27M7.500 1v25M14 1v25M20.500 1v25" stroke="#8a8a8a" />
            <path d="M8 1h6v6H8zM8 14h9v6H8z" fill="#d65532" />
            <path d="M8 7h11v7H8zM8 20h4v6H8z" fill="#3f79b8" />
            <path d="M14.500 17.500h15v13h-15z" fill="#fff" stroke="#555" />
            <path d="M18.500 22.500h7M18.500 25.500h7M24 20l-4 8" stroke="#333" />
          </Svg>
          <span>条件格式</span>
          <SmallCaretRow><Caret /></SmallCaretRow>
        </BigButton>
        <BigButton $w={58}>
          <Svg w={30} h={31}>
            <path d="M1 2.500h24v24H1z" fill="#fff" />
            <path d="M7 8h18v18H7z" fill="#bcd0e8" />
            <path d="M1 2.500h24v24H1zM1 8.500h24M1 14.500h24M1 20.500h24M7 3v24M13 3v24M19 3v24" stroke="#8a8a8a" />
            <path d="M29 8v6l-8 9-3-3z" fill="#666" />
            <path d="M17 20l4 4c0 5-6 6-13 6 4-2 4-9 9-10z" fill="#2f75b5" />
            <circle cx="16" cy="25" r="2" fill="#fff" />
          </Svg>
          <span>套用</span>
          <SmallCaretRow>表格格式 <Caret w={6} /></SmallCaretRow>
        </BigButton>
        <Gallery>
          <GalleryGrid>
            <Swatch>常规 2</Swatch>
            <Swatch $kind="current">常规</Swatch>
            <Swatch $bg="#ffc7ce" $fg="#9c0006">差</Swatch>
            <Swatch $bg="#c6efce" $fg="#006100">好</Swatch>
            <Swatch $bg="#ffeb9c" $fg="#9c5700">适中</Swatch>
            <Swatch $kind="calc" $bg="#f2f2f2" $fg="#fa7d00">计算</Swatch>
            <Swatch $kind="check" $bg="#a5a5a5" $fg="#fff">检查单元格</Swatch>
            <Swatch $kind="note" $fg="#7f7f7f">解释性文本</Swatch>
            <Swatch $fg="#f00">警告文本</Swatch>
            <Swatch $kind="link" $fg="#fa7d00">链接单元格</Swatch>
          </GalleryGrid>
          <GallerySide>
            <GalleryStep $off aria-label="上一行"><Svg w={6} h={4}><path d="M0 4h6L3 0z" fill="#aaa" /></Svg></GalleryStep>
            <GalleryStep aria-label="下一行"><Caret w={6} /></GalleryStep>
            <GalleryStep aria-label="其他"><Svg w={7} h={8}><path d="M0 1h7" stroke="#666" /><path d="M0 4h7L3.500 8z" fill="#666" /></Svg></GalleryStep>
          </GallerySide>
        </Gallery>
      </GroupBody>
      <Foot launch={false}>样式</Foot>
    </Group>
  );
}

function CellsGroup() {
  return (
    <Group $w={135}>
      <GroupBody $pad={4}>
        <BigButton $w={42}>
          <Svg w={28} h={31}>
            <path d="M1 1.500h14v5H1zM8 1.500v5M1 18.500h14v10H1zM8 18.500v10M1 23.500h14" fill="#fff" stroke="#777" />
            <path d="M12.500 9.500h14v6h-14zM19.500 9.500v6" fill="#bcd0e8" stroke="#777" />
            <path d="M9 12.500H3M5.500 9.500l-3 3 3 3" stroke="#2f75b5" strokeWidth="1.800" />
          </Svg>
          <span>插入</span>
          <SmallCaretRow><Caret w={6} /></SmallCaretRow>
        </BigButton>
        <BigButton $w={42}>
          <Svg w={30} h={31}>
            <path d="M1 1.500h14v5H1zM8 1.500v5M1 18.500h14v10H1zM8 18.500v10M1 23.500h14" fill="#fff" stroke="#777" />
            <path d="M7 9.500h10v6H7z" fill="#bcd0e8" stroke="#777" />
            <path d="M16 7l13 14M29 7L16 20" stroke="#d65532" strokeWidth="2.400" />
          </Svg>
          <span>删除</span>
          <SmallCaretRow><Caret w={6} /></SmallCaretRow>
        </BigButton>
        <BigButton $w={42}>
          <Svg w={29} h={31}>
            <path d="M1 0v5M23 0v5M3 2.500h18M6 0L3.500 2.500 6 5M18 0l2.500 2.500L18 5" stroke="#2f75b5" />
            <path d="M1 6.500h27v20H1z" fill="#fff" stroke="#777" />
            <path d="M1 11.500h27M1 21.500h27M8 7v20M15 7v20M22 7v20" stroke="#999" />
            <path d="M8.500 12h7v9h-7z" fill="#2f75b5" />
            <path d="M2 27v3h6l3-3M11 30h5l3-3" stroke="#777" />
          </Svg>
          <span>格式</span>
          <SmallCaretRow><Caret w={6} /></SmallCaretRow>
        </BigButton>
      </GroupBody>
      <Foot launch={false}>单元格</Foot>
    </Group>
  );
}

function EditGroup() {
  return (
    <Group $w={228}>
      <GroupBody $pad={7}>
        <Stack>
          <StackButton>
            <Svg w={15} h={16}><path d="M14 4V1.500H2L8.500 8 2 14.500h12V12" stroke="#444" strokeWidth="2" /></Svg>
            自动求和
          </StackButton>
          <StackButton>
            <Svg w={15} h={16}><path d="M1.500 1.500h12v13h-12z" fill="#fff" stroke="#777" /><path d="M1 1h13v3H1z" fill="#666" /><path d="M7.500 5.500v7M4.500 9.500l3 3 3-3" stroke="#2f75b5" strokeWidth="1.600" /></Svg>
            填充 <Caret w={6} />
          </StackButton>
          <StackButton>
            <Svg w={15} h={14}><path d="M8 2l3-2 2 4-6 7-3-3z" fill="#e57f92" /><path d="M3 9l3.500 3L5 14 1.500 11z" fill="#e57f92" /></Svg>
            清除 <Caret w={6} />
          </StackButton>
        </Stack>
        <Tool $w={21} aria-label="求和选项"><Caret w={6} /></Tool>
        <BigButton $w={64}>
          <Svg w={30} h={31}>
            <path d="M2 15L6 3l4 12M3.500 11h5" stroke="#2f75b5" strokeWidth="2" />
            <path d="M2 18.500h7L2 28.500h8" stroke="#8e5bb5" strokeWidth="2" />
            <path d="M12 10h17l-6.500 7v9l-4-2v-7z" fill="#777" />
          </Svg>
          <span>排序和筛选</span>
          <SmallCaretRow><Caret w={6} /></SmallCaretRow>
        </BigButton>
        <BigButton $w={66}>
          <Svg w={28} h={31}>
            <circle cx="17.500" cy="11" r="9" fill="#fff" stroke="#2f75b5" strokeWidth="1.800" />
            <path d="M11 18L2 28" stroke="#2f75b5" strokeWidth="4" />
          </Svg>
          <span>查找和选择</span>
          <SmallCaretRow><Caret w={6} /></SmallCaretRow>
        </BigButton>
      </GroupBody>
      <Foot launch={false}>编辑</Foot>
    </Group>
  );
}

/* ---------- taskbar ---------- */

function TaskbarRow() {
  return (
    <Taskbar>
      <Weather>
        <Svg w={26} h={18}>
          <defs><linearGradient id="cloud" x1="0" y1="0" x2="0" y2="1"><stop offset="0" stopColor="#7ba6ee" /><stop offset="1" stopColor="#c9dbfb" /></linearGradient></defs>
          <path d="M6 17a5 5 0 0 1-.5-9.900A7 7 0 0 1 18.500 6 5.600 5.600 0 0 1 20 17z" fill="url(#cloud)" />
        </Svg>
        <span>12°C<br />阴</span>
      </Weather>
      <Apps>
        <AppButton aria-label="开始">
          <Svg w={24}>
            <defs><linearGradient id="win" x1="0" y1="0" x2="1" y2="1"><stop offset="0" stopColor="#4cc9f8" /><stop offset="1" stopColor="#0070d0" /></linearGradient></defs>
            <path d="M0 0h11.400v11.400H0zM12.600 0H24v11.400H12.600zM0 12.600h11.400V24H0zM12.600 12.600H24V24H12.600z" fill="url(#win)" />
          </Svg>
        </AppButton>
        <Search>
          <Svg w={15}><circle cx="6.500" cy="6.500" r="5.200" stroke="#222" strokeWidth="1.700" /><path d="M10.500 10.500L14.500 14.500" stroke="#222" strokeWidth="1.800" /></Svg>
          <input aria-label="搜索" placeholder="搜索" />
          <Svg w={46} h={24}>
            <path d="M1 13C-1 6 5 1 12 0c5-1 9 1 8 4-1 4-6 4-8 8-1 5-9 7-11 1z" fill="#e9a860" />
            <path d="M5 5c3-3 8-4 11-3" stroke="#f6cf97" strokeWidth="2" />
            <path d="M2 16C2 10 8 5 15 4l1 3C10 8 8 12 7 17c-2 2-4 1-5-1z" fill="#e0604f" />
            <path d="M9 12c4 0 7 4 9 8" stroke="#c9405e" strokeWidth="2.600" />
            <path d="M13 20l8-4M16 23l3-6" stroke="#d2506a" strokeWidth="2.200" />
            <ellipse cx="34.500" cy="18" rx="11" ry="5" fill="#8a79b8" />
            <path d="M27 2c4-2 11-2 15 0l-1 15c-3 2-10 2-13 0z" fill="#54457c" />
            <path d="M28 12c4 2 9 2 13 0v4c-4 2-9 2-13 0z" fill="#9d8fca" />
            <ellipse cx="34.500" cy="2.500" rx="7" ry="1.800" fill="#73639e" />
          </Svg>
        </Search>
        <AppButton aria-label="任务视图">
          <Svg w={24}><path d="M0 6h18v17H0z" fill="#2a2a2a" /><path d="M6 1h18v16H6z" fill="#f5f5f5" /><path d="M6 6h12v11H6z" fill="#b5b5b5" /></Svg>
        </AppButton>
        <AppButton $dot aria-label="文件资源管理器">
          <Svg w={26} h={24}><path d="M1 2c0-1 1-2 2-2h6l3 3h-2v5H1z" fill="#e2a100" /><path d="M1 5h9l3-3h10c1 0 2 1 2 2v18H1z" fill="#fdc93f" /><path d="M5 23v-6c0-1 1-2 2-2h12c1 0 2 1 2 2v6z" fill="#1182d8" /><path d="M9 18.500h8" stroke="#0a5ca8" strokeWidth="1.500" /></Svg>
        </AppButton>
        <AppButton $dot aria-label="Edge">
          <Svg w={24}>
            <defs><linearGradient id="edge" x1="0" y1="0" x2="1" y2=".4"><stop offset="0" stopColor="#1b9de2" /><stop offset="1" stopColor="#62dc5a" /></linearGradient></defs>
            <circle cx="12" cy="12" r="12" fill="#0f6cbd" />
            <path d="M.3 10C2 3.500 7 0 12 0c7 0 12 5 12 10 0 4-3 6.500-6.500 6.500-3 0-4-1.500-3-3 1-2 0-5-4-5.500C6 7 2 9 .3 10z" fill="url(#edge)" />
            <path d="M9 9c-3 3-2 10 5 12 3 1 6 0 8-1-3 4-8 5-13 3C3 20 3 12 9 9z" fill="#0b3f8f" />
            <path d="M10.500 10c-2 2-1.500 7 4 8 3 .5 5-.5 8.500-3-1 1-3 1.500-5.500 1.500-3 0-4-1.500-3-3 .8-1.500 0-4.500-4-3.500z" fill="#d9f3ea" />
          </Svg>
        </AppButton>
        <AppButton aria-label="Microsoft Store">
          <Svg w={24}><path d="M7 6V2.500C7 1.500 7.500 1 8.500 1h7c1 0 1.500.5 1.500 1.500V6" stroke="#3cc0f0" strokeWidth="2" /><path d="M1 5h22v16c0 2-1 3-3 3H4c-2 0-3-1-3-3z" fill="#12529a" /><path d="M7.500 9.500h4v4h-4z" fill="#f25022" /><path d="M12.500 9.500h4v4h-4z" fill="#7fba00" /><path d="M7.500 14.500h4v4h-4z" fill="#00a4ef" /><path d="M12.500 14.500h4v4h-4z" fill="#ffb900" /></Svg>
        </AppButton>
        <AppButton $dot aria-label="计算器">
          <Svg w={18} h={24}><rect width="18" height="24" rx="1.500" fill="#6b7680" /><path d="M2 2h14v4H2z" fill="#35c1f1" /><path d="M2 8h4v4H2zM7 8h4v4H7zM12 8h4v4h-4zM2 13h4v4H2zM7 13h4v4H7zM2 18h4v4H2zM7 18h4v4H7z" fill="#d5dbe1" /><path d="M12 13h4v9h-4z" fill="#0a4b94" /></Svg>
        </AppButton>
        <AppButton $dot aria-label="微信">
          <Svg w={24}><path d="M9 2c5 0 9 3.500 9 7.500S14 17 9 17c-1 0-2 0-3-.5L2.500 18l.8-3C1.500 14 0 12 0 9.500 0 5.500 4 2 9 2z" fill="#19c45f" /><circle cx="6" cy="7.500" r="1.200" fill="#0b6b33" /><circle cx="12" cy="7.500" r="1.200" fill="#0b6b33" /><path d="M16.500 10c4 0 7.500 2.500 7.500 6 0 2-1 3.300-2.500 4.500l.5 2-2.500-1c-1 .3-2 .5-3 .5-4 0-7-2.700-7-6s3-6 7-6z" fill="#e6ebe8" /><circle cx="14" cy="14" r="1" fill="#888" /><circle cx="19" cy="14" r="1" fill="#888" /></Svg>
        </AppButton>
        <AppButton $dot aria-label="Chrome">
          <Svg w={24}><circle cx="12" cy="12" r="12" fill="#2ba24c" /><path d="M12 12L1.600 6A12 12 0 0 1 22.400 6z" fill="#e33b2e" /><path d="M12 6h10.400A12 12 0 0 1 12 24l5.200-9z" fill="#fcc31e" /><circle cx="12" cy="12" r="5.800" fill="#fff" /><circle cx="12" cy="12" r="4.500" fill="#2f7de9" /></Svg>
        </AppButton>
        <AppButton $dot aria-label="财务">
          <Svg w={24}><rect width="24" height="24" rx="2" fill="#2c5cff" /><path d="M6.500 4l5.500 6 5.500-6M6 11h12M6 15h12M12 10v11" stroke="#fff" strokeWidth="1.900" /></Svg>
        </AppButton>
        <AppButton $on aria-label="Excel">
          <Svg w={24}><path d="M12 3h11v18H12z" fill="#fff" stroke="#217346" /><path d="M14 6h3M19 6h3M14 9h3M19 9h3M14 12h3M19 12h3M14 15h3M19 15h3M14 18h3M19 18h3" stroke="#217346" strokeWidth="1.500" /><path d="M0 3l14-3v24L0 21z" fill="#1e7145" /><path d="M4 8l6 8M10 8l-6 8" stroke="#fff" strokeWidth="2" /></Svg>
        </AppButton>
      </Apps>
      <Tray>
        <TrayButton $w={34} aria-label="显示隐藏的图标"><Svg w={11} h={7}><path d="M1 6l4.500-4.500L10 6" stroke="#222" strokeWidth="1.500" /></Svg></TrayButton>
        <TrayButton $w={30} aria-label="更新">
          <Svg w={17}><path d="M1 8a7 7 0 0 1 12.500-4M14 .5V5H9.500M6 15.500A7 7 0 0 1 2 12M1 15.500V11h4" stroke="#222" strokeWidth="1.300" /><circle cx="12.500" cy="12.500" r="4.200" fill="#0078d4" /></Svg>
        </TrayButton>
        <TrayButton $w={34}>中</TrayButton>
        <TrayButton $w={44}>拼</TrayButton>
        <TrayButton $w={30} aria-label="网络">
          <Svg w={17} h={17}><path d="M10 1.500H1.500v11h11V9M4 15.500h7M7 12.500v3" stroke="#222" strokeWidth="1.300" /><path d="M12.500 1v3M15.500 1v3M11.500 3.500h5V6c0 1.500-1 2-2.500 2s-2.500-.5-2.500-2zM14 8v5" stroke="#222" /></Svg>
        </TrayButton>
        <TrayButton $w={18} aria-label="音量">
          <Svg w={17} h={14}><path d="M1 5h2.500L7 1.500v11L3.500 9H1z" stroke="#222" /><path d="M9 5q1.500 2 0 4M11 3q3 4 0 8M13.500 1.500q4 5.500 0 11" stroke="#222" /></Svg>
        </TrayButton>
        <Clock>13:50<br />2025/12/16</Clock>
      </Tray>
    </Taskbar>
  );
}

/* ---------- page ---------- */

const MONTHS = Array.from({ length: 12 }, (_, i) => i + 1);

export default function App() {
  return (
    <Window>
      <Global />
      <TitleBar>
        <QuickAccess>
          <QuickButton $w={26} aria-label="保存">
            <Svg w={14}><path d="M.8.800h12.400v12.400H.800z" stroke="#fff" strokeWidth="1.600" /><path d="M1 7.500h12M4 13.500V10h6v3.500M6.500 11v2" stroke="#fff" strokeWidth="1.400" /></Svg>
          </QuickButton>
          <QuickButton $w={30} aria-label="撤消">
            <Svg w={15} h={14}><path d="M2 5h7c6 0 6 8-1 8M6 1L2 5l4 4" stroke="#fff" strokeWidth="2.200" /></Svg>
          </QuickButton>
          <Caret c="#fff" w={6} />
          <QuickButton $w={28} $dim aria-label="恢复">
            <Svg w={15} h={14}><path d="M13 5H6c-6 0-6 8 1 8M9 1l4 4-4 4" stroke="#fff" strokeWidth="2.200" /></Svg>
          </QuickButton>
          <Caret c="#5b9678" w={6} />
          <QuickButton $w={30} aria-label="自定义快速访问工具栏">
            <Svg w={7} h={8}><path d="M1 1h5" stroke="#fff" strokeWidth="1.200" /><path d="M0 4h7L3.500 7.500z" fill="#fff" /></Svg>
          </QuickButton>
        </QuickAccess>
        <TitleText>{"2025 FO Duty Roster (HIEX & HI)  -  Excel"}</TitleText>
        <WindowTools>
          <UserName>Lilith Zhong</UserName>
          <QuickButton $w={48} aria-label="功能区显示选项"><Svg w={14} h={11}><path d="M.5.500h13v10H.500zM.500 3h13M7 10V5M5 6.500l2-2 2 2" stroke="#fff" /></Svg></QuickButton>
          <QuickButton $w={46} aria-label="最小化"><Svg w={10} h={2}><path d="M0 1h10" stroke="#fff" /></Svg></QuickButton>
          <QuickButton $w={46} aria-label="还原"><Svg w={10}><path d="M.5 2.500h7v7h-7zM2.500 2.500v-2h7v7h-2" stroke="#fff" /></Svg></QuickButton>
          <QuickButton $w={46} aria-label="关闭"><Svg w={11}><path d="M.5.500l10 10M10.500.500l-10 10" stroke="#fff" strokeWidth="1.100" /></Svg></QuickButton>
        </WindowTools>
      </TitleBar>
      <TabBar>
        <Tab $file>文件</Tab>
        <Tab $active>开始</Tab>
        {["插入", "页面布局", "公式", "数据", "审阅", "视图", "帮助"].map((t) => <Tab key={t}>{t}</Tab>)}
        <TellMe>
          <Svg w={12} h={16}><path d="M4 11.500C4 9 1 8 1 5a5 5 0 0 1 10 0c0 3-3 4-3 6.500zM4 13.500h4M4.500 15.500h3" stroke="#fff" strokeWidth="1.200" /></Svg>
          告诉我你想要做什么
        </TellMe>
        <Share>
          <Svg w={15} h={16}><circle cx="7" cy="4.500" r="3.700" stroke="#fff" strokeWidth="1.200" /><path d="M1 15c0-4 2-6.500 5-6.500 1.500 0 2.500.5 3.500 1.500M8 12.500h6.500M11.500 9.500v6" stroke="#fff" strokeWidth="1.200" /></Svg>
          共享
        </Share>
      </TabBar>
      <Ribbon>
        <Clipboard />
        <FontGroup />
        <AlignGroup />
        <NumberGroup />
        <StyleGroup />
        <CellsGroup />
        <EditGroup />
        <Collapse aria-label="折叠功能区"><UpChevron /></Collapse>
      </Ribbon>
      <FormulaBar>
        <NameBox>
          <input aria-label="名称框" defaultValue="A16" />
          <Caret />
        </NameBox>
        <Grip><Svg w={2} h={11}><path d="M0 0h2v2H0zM0 4.500h2v2H0zM0 9h2v2H0z" fill="#aaa" /></Svg></Grip>
        <FormulaTools>
          <FormulaTool aria-label="取消"><Svg w={11}><path d="M1 1l9 9M10 1l-9 9" stroke="#bbb" strokeWidth="1.700" /></Svg></FormulaTool>
          <FormulaTool aria-label="输入"><Svg w={13} h={11}><path d="M1 6l4 4 7-9" stroke="#bbb" strokeWidth="2" /></Svg></FormulaTool>
          <FormulaTool aria-label="插入函数">
            <Svg w={14}><path d="M8.500 1.500C6 .5 5.500 3 5 6S4 13 1.500 12.500M3 5h5" stroke="#444" strokeWidth="1.300" /><path d="M8 7c2 0 2 5 4.500 5M12.500 7C11 7 9 12 7.500 12" stroke="#444" strokeWidth="1.200" /></Svg>
          </FormulaTool>
        </FormulaTools>
        <FormulaBox>
          <textarea aria-label="编辑栏" defaultValue="Alice Zhu 朱春艳" />
          <UpChevron />
        </FormulaBox>
      </FormulaBar>
      <SheetArea>
        <Roster />
        <ScrollV>
          <ScrollStep aria-label="向上滚动"><Svg w={7} h={4}><path d="M0 4h7L3.500 0z" fill="#666" /></Svg></ScrollStep>
          <Track><Thumb $share="82.300%" /></Track>
          <ScrollStep aria-label="向下滚动"><Caret /></ScrollStep>
        </ScrollV>
      </SheetArea>
      <SheetTabs>
        <TabNav aria-label="上一张"><Svg w={5} h={8}><path d="M5 0v8L0 4z" fill="#bbb" /></Svg></TabNav>
        <TabNav aria-label="下一张"><Svg w={5} h={8}><path d="M0 0v8l5-4z" fill="#bbb" /></Svg></TabNav>
        <SheetTabList>
          {MONTHS.map((m) => <SheetTab key={m} $w={m > 9 ? 53 : 45} $on={m === 12}>{m}月</SheetTab>)}
        </SheetTabList>
        <AddSheet aria-label="新工作表">
          <Svg w={17}><circle cx="8.500" cy="8.500" r="7.600" stroke="#777" strokeWidth="1.200" /><path d="M8.500 4.500v8M4.500 8.500h8" stroke="#666" strokeWidth="1.800" /></Svg>
        </AddSheet>
        <TabGrip><Svg w={2} h={11}><path d="M0 0h2v2H0zM0 4.500h2v2H0zM0 9h2v2H0z" fill="#aaa" /></Svg></TabGrip>
        <ScrollH>
          <ScrollStep aria-label="向左滚动"><Svg w={4} h={7}><path d="M4 0v7L0 3.500z" fill="#666" /></Svg></ScrollStep>
          <Track $row><Thumb $share="93%" /></Track>
          <ScrollStep aria-label="向右滚动"><Svg w={4} h={7}><path d="M0 0v7l4-3.500z" fill="#666" /></Svg></ScrollStep>
        </ScrollH>
      </SheetTabs>
      <StatusBar>
        <span>就绪</span>
        <Stats>
          <span>平均值: 3822176454</span>
          <span>计数: 39</span>
          <span>求和: 19110882272</span>
        </Stats>
        <ViewButton $on aria-label="普通"><Svg w={13}><path d="M.5.500h12v12H.500zM.500 4.500h12M.500 8.500h12M4.500.500v12M8.500.500v12" stroke="#666" /></Svg></ViewButton>
        <ViewButton aria-label="页面布局视图"><Svg w={14} h={13}><path d="M.5.500h13v12H.500zM3.500 2.500h7v8h-7zM5 4.500h4M5 6.500h4M5 8.500h4" stroke="#666" /></Svg></ViewButton>
        <ViewButton aria-label="分页预览"><Svg w={14} h={13}><path d="M.5.500h13v12H.500zM.500 7.500h9v-7M5 .5v7" stroke="#666" /></Svg></ViewButton>
        <ZoomStep aria-label="缩小"><Svg w={6} h={2}><path d="M0 1h6" stroke="#555" strokeWidth="2" /></Svg></ZoomStep>
        <ZoomRange type="range" min={0} max={100} defaultValue={41} aria-label="缩放" />
        <ZoomStep aria-label="放大"><Svg w={8}><path d="M0 4h8M4 0v8" stroke="#555" strokeWidth="2" /></Svg></ZoomStep>
        <ZoomValue>80%</ZoomValue>
      </StatusBar>
      <TaskbarRow />
    </Window>
  );
}
